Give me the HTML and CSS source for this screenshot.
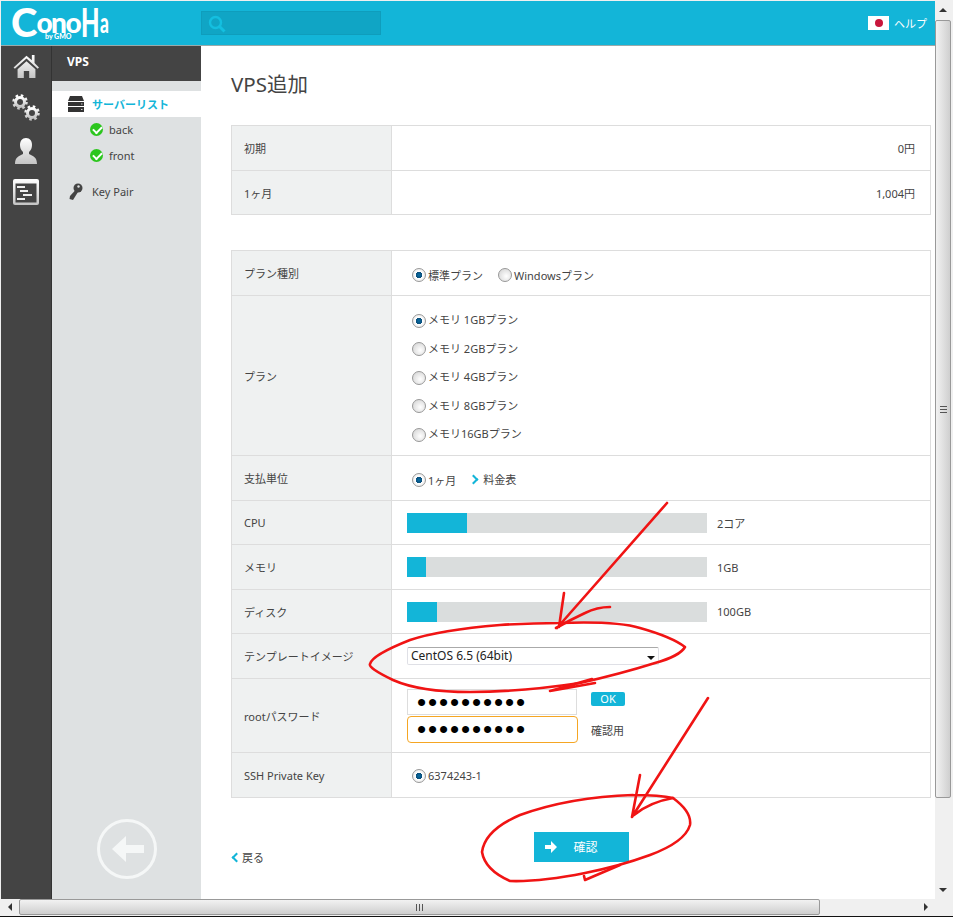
FILE: index.html
```html
<!DOCTYPE html>
<html lang="ja">
<head>
    <meta charset="UTF-8">
    <title>VPS追加</title>
    <link rel="stylesheet" href="styles.css">
</head>
<body>
<div class="window">
    <div class="viewport">
        <header class="topbar">
            <div class="logo">
                <span class="logo-c">C</span><span class="logo-ono">ono</span><span class="logo-h">H</span><span class="logo-a">a</span>
                <span class="logo-by">by GMO</span>
            </div>
            <div class="search">
                <svg width="18" height="18" viewBox="0 0 18 18"><circle cx="7.5" cy="7.5" r="5.5" fill="none" stroke="#14bfe0" stroke-width="2.4"/><path d="M11.5 11.5l5 5" stroke="#14bfe0" stroke-width="3"/></svg>
            </div>
            <div class="help">
                <span class="flag"><i></i></span>
                <span>ヘルプ</span>
            </div>
        </header>

        <div class="main">
            <nav class="rail">
                <svg width="27" height="25" viewBox="0 0 30 28"><defs><linearGradient id="g1" x1="0" y1="0" x2="0" y2="1"><stop offset="0" stop-color="#fff"/><stop offset="1" stop-color="#c4c4c4"/></linearGradient></defs><path d="M15 2L21 7V1h3v9l5 5-1.500 1.500L15 5 2 16.500.5 15zM5 17L15 8l10 9v10H18v-8h-6v8H5z" fill="url(#g1)"/></svg>
                <svg width="30" height="30" viewBox="0 0 30 30"><g fill="none" stroke="url(#g1)"><circle cx="9" cy="9" r="4.500" stroke-width="3"/><circle cx="9" cy="9" r="6.500" stroke-width="2.500" stroke-dasharray="2.500 2.600"/><circle cx="21" cy="20" r="4.500" stroke-width="3"/><circle cx="21" cy="20" r="6.500" stroke-width="2.500" stroke-dasharray="2.500 2.600"/></g></svg>
                <svg width="24" height="28" viewBox="0 0 24 28"><path d="M12 1c4 0 6 3 6 7 0 3-1 5-3 7v2c4 2 8 3 8 10H1c0-7 4-8 8-10v-2C7 13 6 11 6 8c0-4 2-7 6-7z" fill="url(#g1)"/></svg>
                <svg width="26" height="26" viewBox="0 0 26 26"><rect x="0" y="0" width="26" height="26" rx="2" fill="url(#g1)"/><rect x="2.500" y="4.500" width="21" height="19" fill="#444"/><path d="M4 7h8v2H4zM7 11h8v2H7zM10 15h9v2h-9zM4 19h8v2H4z" fill="#eee"/></svg>
            </nav>

            <aside class="side">
                <div class="side-title">VPS</div>
                <ul class="side-menu">
                    <li class="side-item active">
                        <svg width="16" height="16" viewBox="0 0 16 16"><path d="M2 0h12l2 5H0zM0 6h16v4H0zM0 11h16v5H0z" fill="#333"/><path d="M13 8h1.500M13 13.500h1.500" stroke="#ccc"/></svg>
                        サーバーリスト
                    </li>
                    <li class="side-sub"><span class="check"></span>back</li>
                    <li class="side-sub"><span class="check"></span>front</li>
                    <li class="side-item key">
                        <svg width="14" height="18" viewBox="0 0 14 18"><circle cx="9" cy="5" r="4.500" fill="#444"/><circle cx="9.500" cy="3.500" r="1.200" fill="#dee1e2"/><path d="M6.500 7l2.500 2-5 8-3.500-1 .5-3z" fill="#444"/></svg>
                        Key Pair
                    </li>
                </ul>
                <div class="side-back">
                    <svg width="60" height="60" viewBox="0 0 60 60"><circle cx="30" cy="30" r="28.500" fill="none" stroke="#f5f7f7" stroke-width="3"/><path d="M15 30l14-13v9h18v8H29v9z" fill="#f5f7f7"/></svg>
                </div>
            </aside>

            <main class="content">
                <h1 class="title">VPS追加</h1>

                <table class="form-table price">
                    <tr class="row-45"><th>初期</th><td class="amount">0円</td></tr>
                    <tr class="row-44"><th>1ヶ月</th><td class="amount">1,004円</td></tr>
                </table>

                <table class="form-table spec">
                    <tr class="row-45">
                        <th>プラン種別</th>
                        <td>
                            <div class="radio-line">
                                <label class="radio on">標準プラン</label>
                                <label class="radio">Windowsプラン</label>
                            </div>
                        </td>
                    </tr>
                    <tr class="row-plan">
                        <th>プラン</th>
                        <td>
                            <div class="radio-stack">
                                <label class="radio on">メモリ 1GBプラン</label>
                                <label class="radio">メモリ 2GBプラン</label>
                                <label class="radio">メモリ 4GBプラン</label>
                                <label class="radio">メモリ 8GBプラン</label>
                                <label class="radio">メモリ16GBプラン</label>
                            </div>
                        </td>
                    </tr>
                    <tr class="row-45">
                        <th>支払単位</th>
                        <td>
                            <div class="radio-line">
                                <label class="radio on">1ヶ月</label>
                                <a class="price-link">料金表</a>
                            </div>
                        </td>
                    </tr>
                    <tr class="row-44">
                        <th>CPU</th>
                        <td><div class="meter"><div class="bar"><div class="fill" style="width: 60px"></div></div><span>2コア</span></div></td>
                    </tr>
                    <tr class="row-45">
                        <th>メモリ</th>
                        <td><div class="meter"><div class="bar"><div class="fill" style="width: 19px"></div></div><span>1GB</span></div></td>
                    </tr>
                    <tr class="row-44">
                        <th>ディスク</th>
                        <td><div class="meter"><div class="bar"><div class="fill" style="width: 30px"></div></div><span>100GB</span></div></td>
                    </tr>
                    <tr class="row-45">
                        <th>テンプレートイメージ</th>
                        <td><div class="select">CentOS 6.5 (64bit)</div></td>
                    </tr>
                    <tr class="row-pass">
                        <th>rootパスワード</th>
                        <td>
                            <div class="pass-line">
                                <input class="pass" type="password" value="abcdefghij">
                                <button class="ok">OK</button>
                            </div>
                            <div class="pass-line">
                                <input class="pass focus" type="password" value="abcdefghij">
                                <span>確認用</span>
                            </div>
                        </td>
                    </tr>
                    <tr class="row-45">
                        <th>SSH Private Key</th>
                        <td><div class="radio-line flat"><label class="radio on">6374243-1</label></div></td>
                    </tr>
                </table>

                <div class="actions">
                    <a class="back-link">戻る</a>
                    <button class="confirm">
                        <svg width="12" height="12" viewBox="0 0 12 12"><path d="M0 4h6V0l6 6-6 6V8H0z" fill="#fff"/></svg>
                        確認
                    </button>
                </div>
            </main>
        </div>
    </div>

    <div class="scroll-v">
        <span class="arrow up"></span>
        <div class="track"><div class="thumb"><i></i></div></div>
        <span class="arrow down"></span>
    </div>
    <div class="scroll-h">
        <span class="arrow left"></span>
        <div class="track"><div class="thumb"><i></i></div></div>
        <span class="arrow right"></span>
    </div>
    <div class="corner"></div>

    <!-- red pen marks drawn over the screenshot -->
    <svg class="pen" width="953" height="917" viewBox="0 0 953 917">
        <path d="M667 503L557 628M564 593L559 627M610 607Q597 607 585 613Q570 620 556 628"/>
        <path d="M560 623Q617 621 640 628Q672 637 685 647Q680 656 655 663Q620 674 580 683Q520 692 470 692Q420 692 393 680Q368 668 370 664Q372 655 410 640Q440 630 500 625Q530 623 560 623"/>
        <path d="M592 679L550 691L595 683"/>
        <path d="M708 698L632 817M640 775L632 817M673 798Q650 802 634 815"/>
        <path d="M633 795Q660 795 673 798Q692 812 690 825Q685 842 650 855Q620 866 585 873Q540 882 510 881Q485 870 482 852Q485 830 520 815Q570 797 633 795"/>
        <path d="M620 865L585 880L584 876"/>
    </svg>
</div>
</body>
</html>
```

FILE: styles.css
```css
* {
    box-sizing: border-box;
}
html, body {
    margin: 0;
    height: 100%;
    overflow: hidden;
}
body {
    font-family: "Noto Sans", "Noto Sans CJK JP", sans-serif;
    font-size: 11px;
    color: #444;
    background: #fff;
}
.window {
    position: relative;
    width: 953px;
    height: 917px;
    display: grid;
    grid-template-columns: 934px 16px;
    grid-template-rows: 898px 16px;
    padding: 1px 2px 2px 1px;
    background: #f0f0f0;
    border-bottom: 1px solid #111;
}
.viewport {
    display: flex;
    flex-direction: column;
    background: #fff;
    overflow: hidden;
}

/* top bar */
.topbar {
    height: 45px;
    flex: none;
    display: flex;
    align-items: center;
    background: #13b5d8;
    border-bottom: 1px solid #9aa;
}
.logo {
    position: relative;
    width: 200px;
    height: 44px;
    padding: 3px 0 0 10px;
    color: #fff;
    font-family: Lato, sans-serif;
    font-weight: 900;
    font-size: 28px;
    line-height: 36px;
    white-space: nowrap;
}
.logo span {
    display: inline-block;
}
.logo-c {
    font-size: 40px;
    line-height: 48px;
    margin: -6px -1px -6px 0;
}
.logo-ono {
    letter-spacing: -1.500px;
    margin-right: 1px;
    position: relative;
    top: -4px;
}
.logo-h {
    font-size: 40px;
    line-height: 48px;
    transform: scaleX(0.6);
    transform-origin: left center;
    margin: -6px -12px -6px 0;
}
.logo-a {
    transform: scaleX(0.62);
    transform-origin: left center;
    position: relative;
    top: -4px;
}
.logo .logo-by {
    position: absolute;
    left: 44px;
    top: 31px;
    font-size: 7px;
    line-height: 8px;
}
.search {
    width: 180px;
    height: 24px;
    padding: 3px 6px;
    background: #10a5c5;
    border: 1px solid #0f9dbc;
}
.help {
    margin-left: auto;
    margin-right: 8px;
    display: flex;
    align-items: center;
    gap: 5px;
    color: #fff;
    font-size: 11px;
}
.flag {
    width: 21px;
    height: 14px;
    background: #fff;
    display: flex;
    align-items: center;
    justify-content: center;
}
.flag i {
    width: 8px;
    height: 8px;
    border-radius: 50%;
    background: #c8163c;
}

/* left columns */
.main {
    flex: 1;
    display: flex;
    min-height: 0;
}
.rail {
    width: 51px;
    flex: none;
    background: #444;
    border-right: 1px solid #333;
    display: flex;
    flex-direction: column;
    align-items: center;
    padding-top: 8px;
    gap: 14px;
}
.side {
    width: 149px;
    flex: none;
    background: #dee1e2;
    display: flex;
    flex-direction: column;
}
.side-title {
    height: 35px;
    background: #444;
    color: #fff;
    font-weight: 700;
    font-size: 12px;
    line-height: 32px;
    padding-left: 15px;
}
.side-menu {
    list-style: none;
    margin: 10px 0 0;
    padding: 0;
}
.side-item {
    height: 26px;
    display: flex;
    align-items: center;
    gap: 8px;
    padding-left: 16px;
}
.side-item.active {
    background: #fff;
    color: #13b5d8;
    font-weight: 700;
}
.side-item.key {
    margin-top: 10px;
    gap: 9px;
    padding: 0 0 1px 17px;
}
.side-sub {
    height: 26px;
    display: flex;
    align-items: center;
    gap: 6px;
    padding: 0 0 1px 38px;
}
.check {
    position: relative;
    width: 13px;
    height: 13px;
    border-radius: 50%;
    background: #2cc61e;
}
.check::after {
    content: "";
    position: absolute;
    left: 3px;
    top: 3px;
    width: 7px;
    height: 4px;
    border-left: 2px solid #fff;
    border-bottom: 2px solid #fff;
    transform: rotate(-45deg);
}
.side-back {
    margin-top: auto;
    margin-bottom: 20px;
    display: flex;
    justify-content: center;
}

/* content */
.content {
    flex: 1;
    padding: 0 4px 0 30px;
}
.title {
    margin: 24px 0 27px;
    font-size: 20.500px;
    font-weight: 400;
    line-height: 28px;
    color: #444;
}
.form-table {
    width: 700px;
    border-collapse: collapse;
    table-layout: fixed;
}
.form-table th,
.form-table td {
    border: 1px solid #ddd;
    padding: 0;
}
.form-table th {
    width: 160px;
    background: #eff1f1;
    font-weight: 400;
    text-align: left;
    padding-left: 12px;
}
.form-table td {
    padding-left: 15px;
}
.form-table .amount {
    text-align: right;
    padding-right: 15px;
}
.price {
    margin-bottom: 35px;
}
.row-44 {
    height: 44px;
}
.row-45 {
    height: 45px;
}
.row-plan {
    height: 160px;
}
.row-pass {
    height: 74px;
}

/* radios */
.radio-line {
    display: flex;
    align-items: center;
    gap: 15px;
    padding: 4px 0 0 5px;
}
.radio-line.flat {
    padding-top: 1px;
}
.radio-stack {
    display: flex;
    flex-direction: column;
    padding: 4px 0 0 5px;
    line-height: 28.500px;
}
.radio {
    display: flex;
    align-items: center;
    gap: 2px;
}
.radio::before {
    content: "";
    width: 12px;
    height: 12px;
    border-radius: 50%;
    border: 1px solid #999;
    background: radial-gradient(circle at 60% 60%, #fff, #cfcfcf);
}
.radio.on::before {
    background: radial-gradient(circle, #0a6fa5 0, #0b4f7c 3px, #fff 3.500px, #ddd 100%);
}
.price-link {
    margin: 0 0 3px -1px;
}
.price-link::before {
    content: "";
    display: inline-block;
    width: 5px;
    height: 5px;
    border-top: 2px solid #13b5d8;
    border-right: 2px solid #13b5d8;
    transform: rotate(45deg);
    margin-right: 6px;
    vertical-align: 1px;
}

/* meters */
.meter {
    display: flex;
    align-items: center;
    gap: 10px;
}
.bar {
    width: 300px;
    height: 20px;
    background: #dadddd;
}
.fill {
    height: 100%;
    background: #13b5d8;
}

/* template select */
.select {
    position: relative;
    width: 252px;
    height: 18px;
    padding-left: 3px;
    font-size: 12px;
    line-height: 16px;
    color: #222;
    border: 1px solid #dfe0e6;
    border-top-color: #aaa;
    border-radius: 2px;
}
.select::after {
    content: "";
    position: absolute;
    right: 3px;
    top: 8px;
    border-left: 4px solid transparent;
    border-right: 4px solid transparent;
    border-top: 4px solid #111;
}

/* password */
.form-table .row-pass td {
    vertical-align: top;
    padding-top: 10px;
}
.pass-line {
    display: flex;
    align-items: center;
    gap: 14px;
    margin-bottom: 1px;
}
.pass {
    width: 170px;
    height: 26px;
    margin: 0;
    padding: 0 9px;
    border: 1px solid #ddd;
    outline: none;
    font-family: "Liberation Sans", sans-serif;
    font-size: 26px;
    letter-spacing: 1.900px;
    color: #000;
}
.pass.focus {
    width: 171px;
    height: 27px;
    border-color: #f5a623;
    border-radius: 4px;
}
.pass-line span {
    margin-left: -1px;
}
.ok {
    width: 34px;
    height: 14px;
    margin-bottom: 6px;
    padding: 0;
    border: none;
    border-radius: 2px;
    background: #13b5d8;
    color: #fff;
    font-family: inherit;
    font-size: 11px;
    line-height: 14px;
}

/* footer actions */
.actions {
    position: relative;
    display: flex;
    justify-content: center;
    height: 30px;
    margin-top: 34px;
}
.back-link {
    position: absolute;
    left: 0;
    top: 17px;
}
.back-link::before {
    content: "";
    display: inline-block;
    width: 5px;
    height: 5px;
    border-left: 2px solid #13b5d8;
    border-bottom: 2px solid #13b5d8;
    transform: rotate(45deg);
    margin: 0 2px 0 2px;
    vertical-align: 1px;
}
.confirm {
    width: 95px;
    height: 30px;
    padding: 0 0 0 11px;
    border: none;
    background: #13b5d8;
    color: #fff;
    font-family: inherit;
    font-size: 12px;
    display: flex;
    align-items: center;
    gap: 17px;
}

/* browser scrollbars */
.scroll-v,
.scroll-h {
    display: flex;
    align-items: center;
    background: #f0f0f0;
}
.scroll-v {
    flex-direction: column;
}
.scroll-v .track,
.scroll-h .track {
    flex: 1;
    display: flex;
    align-self: stretch;
}
.scroll-v .track {
    padding-top: 1px;
}
.thumb {
    display: flex;
    align-items: center;
    justify-content: center;
    border: 1px solid #999;
    border-radius: 2px;
}
.scroll-v .thumb {
    width: 100%;
    height: 778px;
    background: linear-gradient(to right, #f2f2f2, #cfcfcf);
}
.scroll-h .thumb {
    width: 801px;
    height: 100%;
    background: linear-gradient(to bottom, #f2f2f2, #cfcfcf);
}
.thumb i {
    width: 7px;
    height: 7px;
    background: repeating-linear-gradient(to bottom, #555 0 1px, transparent 1px 3px);
}
.scroll-h .thumb i {
    background: repeating-linear-gradient(to right, #555 0 1px, transparent 1px 3px);
}
.arrow {
    flex: none;
    width: 18px;
    height: 18px;
    display: flex;
    align-items: center;
    justify-content: center;
}
.scroll-v .arrow {
    width: 16px;
}
.scroll-h .arrow {
    height: 16px;
}
.arrow::before {
    content: "";
    border: 4px solid transparent;
}
.arrow.up::before {
    border-top: 0;
    border-bottom: 4px solid #333;
}
.arrow.down::before {
    border-bottom: 0;
    border-top: 4px solid #333;
}
.arrow.left::before {
    border-left: 0;
    border-right: 4px solid #333;
}
.arrow.right::before {
    border-right: 0;
    border-left: 4px solid #333;
}
.corner {
    background: #f0f0f0;
}

/* annotation layer */
.pen {
    position: absolute;
    left: 0;
    top: 0;
    pointer-events: none;
    fill: none;
    stroke: #f01414;
    stroke-width: 2.600;
    stroke-linejoin: round;
    stroke-linecap: round;
}
```
